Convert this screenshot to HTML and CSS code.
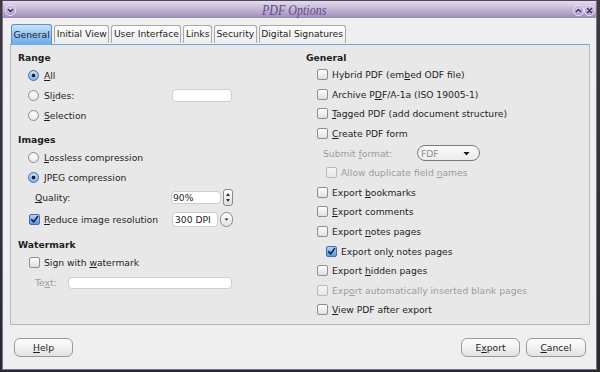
FILE: index.html
```html
<!DOCTYPE html>
<html>
<head>
<meta charset="utf-8">
<title>PDF Options</title>
<link rel="stylesheet" href="styles.css">
</head>
<body>
<div class="win">
  <div class="frame">
    <div class="titlebar">
      <span class="tbtn menu"><svg viewBox="0 0 11 11" width="11" height="11"><path d="M3.4 4.4 L5.5 6.6 L7.6 4.4" fill="none" stroke="#3b2a5c" stroke-width="1.4" stroke-linecap="round" stroke-linejoin="round"/></svg></span>
      <span class="title">PDF Options</span>
      <span class="tbtns">
        <span class="tbtn"><svg viewBox="0 0 11 11" width="11" height="11"><path d="M3.4 6.6 L5.5 4.4 L7.6 6.6" fill="none" stroke="#3b2a5c" stroke-width="1.4" stroke-linecap="round" stroke-linejoin="round"/></svg></span>
        <span class="tbtn"><svg viewBox="0 0 11 11" width="11" height="11"><path d="M3.6 3.6 L7.4 7.4 M7.4 3.6 L3.6 7.4" fill="none" stroke="#3b2a5c" stroke-width="1.4" stroke-linecap="round"/></svg></span>
      </span>
    </div>
    <div class="body">
      <div class="tabs">
        <div class="tab sel">General</div>
        <div class="tab">Initial View</div>
        <div class="tab">User Interface</div>
        <div class="tab">Links</div>
        <div class="tab">Security</div>
        <div class="tab">Digital Signatures</div>
      </div>
      <div class="panel">
        <div class="col left">
          <div class="head">Range</div>
          <div class="row r20"><span class="radio on"></span><span><u>A</u>ll</span></div>
          <div class="row r20"><span class="radio"></span><span>Sl<u>i</u>des:</span><span class="inp w-slides"></span></div>
          <div class="row r20"><span class="radio"></span><span><u>S</u>election</span></div>

          <div class="head gap">Images</div>
          <div class="row r20"><span class="radio"></span><span><u>L</u>ossless compression</span></div>
          <div class="row r20"><span class="radio on"></span><span><u>J</u>PEG compression</span></div>
          <div class="row r21 sub"><span><u>Q</u>uality:</span><span class="inp w-q">90%</span><span class="spin"><svg viewBox="0 0 8 15" width="8" height="15"><path d="M2 6 L4 3 L6 6 Z M2 9 L4 12 L6 9 Z" fill="#333"/></svg></span></div>
          <div class="row r22 cbrow"><span class="cb on"><svg viewBox="0 0 9 9" width="9" height="9"><path d="M1.6 4.6 L3.6 7 L7.6 1.6" fill="none" stroke="#17243c" stroke-width="1.6" stroke-linecap="round" stroke-linejoin="round"/></svg></span><span><u>R</u>educe image resolution</span><span class="inp w-dpi">300 DPI</span><span class="drop"><svg viewBox="0 0 11 13" width="11" height="13"><path d="M3.5 5.5 L5.5 7.8 L7.5 5.5 Z" fill="#333"/></svg></span></div>

          <div class="head gap">Watermark</div>
          <div class="row r20 cbrow"><span class="cb"></span><span>Sign with <u>w</u>atermark</span></div>
          <div class="row r21 sub"><span class="dis">Te<u>x</u>t:</span><span class="inp w-text"></span></div>
        </div>

        <div class="col right">
          <div class="head">General</div>
          <div class="row rr"><span class="cb"></span><span>Hybrid PDF (em<u>b</u>ed ODF file)</span></div>
          <div class="row rr"><span class="cb"></span><span>Archive P<u>D</u>F/A-1a (ISO 19005-1)</span></div>
          <div class="row rr"><span class="cb"></span><span><u>T</u>agged PDF (add document structure)</span></div>
          <div class="row rr"><span class="cb"></span><span><u>C</u>reate PDF form</span></div>
          <div class="row rr fmt"><span class="dis fmtlabel">Submit <u>f</u>ormat:</span><span class="select"><span class="selval">FDF</span><svg viewBox="0 0 9 9" width="9" height="9"><path d="M1.5 3 L4.5 6.5 L7.5 3 Z" fill="#111"/></svg></span></div>
          <div class="row rr ind"><span class="cb dis-box"></span><span class="dis">Allow duplicate field <u>n</u>ames</span></div>
          <div class="row rr"><span class="cb"></span><span>Export <u>b</u>ookmarks</span></div>
          <div class="row rr"><span class="cb"></span><span><u>E</u>xport comments</span></div>
          <div class="row rr"><span class="cb"></span><span>Export <u>n</u>otes pages</span></div>
          <div class="row rr ind"><span class="cb on"><svg viewBox="0 0 9 9" width="9" height="9"><path d="M1.6 4.6 L3.6 7 L7.6 1.6" fill="none" stroke="#17243c" stroke-width="1.6" stroke-linecap="round" stroke-linejoin="round"/></svg></span><span>Export onl<u>y</u> notes pages</span></div>
          <div class="row rr"><span class="cb"></span><span>Export <u>h</u>idden pages</span></div>
          <div class="row rr"><span class="cb dis-box"></span><span class="dis">Exp<u>o</u>rt automatically inserted blank pages</span></div>
          <div class="row rr"><span class="cb"></span><span><u>V</u>iew PDF after export</span></div>
        </div>
      </div>
      <div class="buttons">
        <span class="btn w59"><u>H</u>elp</span>
        <span class="spacer"></span>
        <span class="btn w59">E<u>x</u>port</span>
        <span class="btn w60"><u>C</u>ancel</span>
      </div>
    </div>
  </div>
</div>
</body>
</html>
```

FILE: styles.css
```css
* { box-sizing: border-box; margin: 0; padding: 0; }
html, body { width: 600px; height: 372px; overflow: hidden; }
body {
  background: #2c2c2c;
  font-family: "DejaVu Sans", "Liberation Sans", sans-serif;
  font-size: 9.2px;
  color: #1e1e1e;
}
u { text-decoration: underline; text-underline-offset: 1px; }

.win {
  width: 600px;
  height: 372px;
  padding: 0 3px 2px 2px;
  background: linear-gradient(#3c3c3c, #2a2a2a);
}
.frame {
  height: 100%;
  border: 1px solid #7d6b9a;
  border-top-color: #4c4460;
  background: #efefef;
  display: flex;
  flex-direction: column;
}

/* title bar */
.titlebar {
  height: 17px;
  flex: none;
  display: grid;
  grid-template-columns: 1fr auto 1fr;
  align-items: center;
  padding: 2px 1px 0 2px;
  background: linear-gradient(#e3dcea, #c6b9d6 45%, #9d8cb7);
}
.title {
  font-family: "Liberation Serif", "DejaVu Serif", serif;
  font-style: italic;
  font-size: 15px;
  line-height: 15px;
  color: #644a8c;
  display: inline-block;
  transform: scaleX(0.8);
  margin-right: 12px;
}
.tbtns { justify-self: end; display: flex; gap: 0; }
.menu { justify-self: start; }
.tbtn {
  width: 11px;
  height: 11px;
  border-radius: 50%;
  border: 1px solid #efe9f6;
  background: radial-gradient(circle at 50% 40%, #ece6f6 0, #bfb0dc 45%, #8a77b6 100%);
  display: flex;
  align-items: center;
  justify-content: center;
  overflow: hidden;
}
.tbtn svg { flex: none; }

/* body */
.body {
  flex: 1;
  display: flex;
  flex-direction: column;
  padding: 6px 6px 0 7px;
}

.tabs {
  display: flex;
  gap: 2px;
  height: 20px;
  padding-left: 1px;
  align-items: flex-start;
  position: relative;
  z-index: 1;
  flex: none;
}
.tab {
  height: 18px;
  margin-top: 1px;
  padding: 0 1.5px;
  line-height: 16px;
  border: 1px solid #a8a8a8;
  border-bottom: none;
  border-radius: 3px 3px 0 0;
  background: linear-gradient(#fcfcfc, #ededed);
  white-space: nowrap;
}
.tab.sel {
  height: 21px;
  margin-top: 0;
  line-height: 19px;
  border-color: #5a92d0;
  background: linear-gradient(#c8e4fb, #8cc0f1 55%, #6eabe8);
}

.panel {
  height: 281px;
  flex: none;
  border: 1px solid #b7b7b7;
  border-top-color: #6ea7df;
  background: #e8e8e8;
  display: grid;
  grid-template-columns: 288px 1fr;
  padding: 5px 0 0 7px;
}
.col { display: flex; flex-direction: column; }
.left { padding-right: 73px; }

.head { height: 15px; line-height: 15px; font-weight: bold; }
.head.gap { margin-top: 7px; }

.row { display: flex; align-items: center; white-space: nowrap; }
.r20 { height: 20px; }
.r21 { height: 21px; }
.r22 { height: 22px; }
.rr { height: 19.6px; }

.left .row { padding-left: 10px; }
.left .row.cbrow { padding-left: 11px; }
.left .row.sub { padding-left: 17px; }
.right .row { padding-left: 11px; }
.right .row.ind { padding-left: 20px; }
.right .row.fmt { padding-left: 17px; }

.dis { color: #9c9c9c; }

.radio {
  width: 11px;
  height: 11px;
  flex: none;
  border-radius: 50%;
  border: 1px solid #8e8e8e;
  background: radial-gradient(circle at 50% 35%, #ffffff, #e0e0e0);
  margin-right: 5px;
}
.radio.on {
  border-color: #3f6fb3;
  background:
    radial-gradient(circle at 50% 50%, #16243c 0, #16243c 1.5px, transparent 2.3px),
    radial-gradient(circle at 50% 30%, #dbeafc, #6ea4e6);
}

.cb {
  width: 11px;
  height: 11px;
  flex: none;
  border-radius: 2px;
  border: 1px solid #8e8e8e;
  background: linear-gradient(#ffffff, #e0e0e0);
  margin-right: 4px;
  display: flex;
  align-items: center;
  justify-content: center;
}
.cb.on {
  border-color: #3f6fb3;
  background: linear-gradient(#b2d2f7, #5c95dd);
}
.cb.dis-box {
  border-color: #b8b8b8;
  background: linear-gradient(#f7f7f7, #e6e6e6);
}

.inp {
  display: block;
  height: 13px;
  background: #ffffff;
  border: 1px solid #cdcdcd;
  border-radius: 4px;
  line-height: 11px;
  padding-left: 1px;
  color: #1e1e1e;
}
.w-slides { width: 60px; margin-left: auto; margin-right: 1px; }
.w-q { width: 50px; margin-left: auto; }
.w-dpi { width: 46px; height: 15px; line-height: 13px; margin-left: auto; padding-left: 2px; }
.w-text { width: 164px; height: 12px; margin-left: auto; margin-right: 1px; }

.spin {
  width: 10px;
  height: 17px;
  margin-left: 2px;
  border: 1px solid #8a8a8a;
  border-radius: 3px;
  background: linear-gradient(#ffffff, #dedede);
  display: flex;
  align-items: center;
  justify-content: center;
}
.drop {
  width: 13px;
  height: 15px;
  margin-left: 2px;
  border: 1px solid #8a8a8a;
  border-radius: 7px;
  background: linear-gradient(#ffffff, #e2e2e2);
  display: flex;
  align-items: center;
  justify-content: center;
}

.fmtlabel { width: 94px; }
.select {
  width: 63px;
  height: 16px;
  border: 1px solid #7a7a7a;
  border-radius: 8px;
  background: linear-gradient(#fafafa, #ececec);
  display: flex;
  align-items: center;
  padding: 0 8px 0 3px;
}
.selval { color: #8e8e8e; flex: 1; }

.buttons {
  display: flex;
  gap: 6px;
  margin-top: 13px;
  padding: 0 4px;
  flex: none;
}
.spacer { flex: 1; }
.btn {
  height: 19px;
  border: 1px solid #9b9b9b;
  border-radius: 6px;
  background: linear-gradient(#fdfdfd, #f1f1f1 50%, #e1e1e1);
  display: flex;
  align-items: center;
  justify-content: center;
}
.w59 { width: 59px; }
.w60 { width: 60px; }
```
